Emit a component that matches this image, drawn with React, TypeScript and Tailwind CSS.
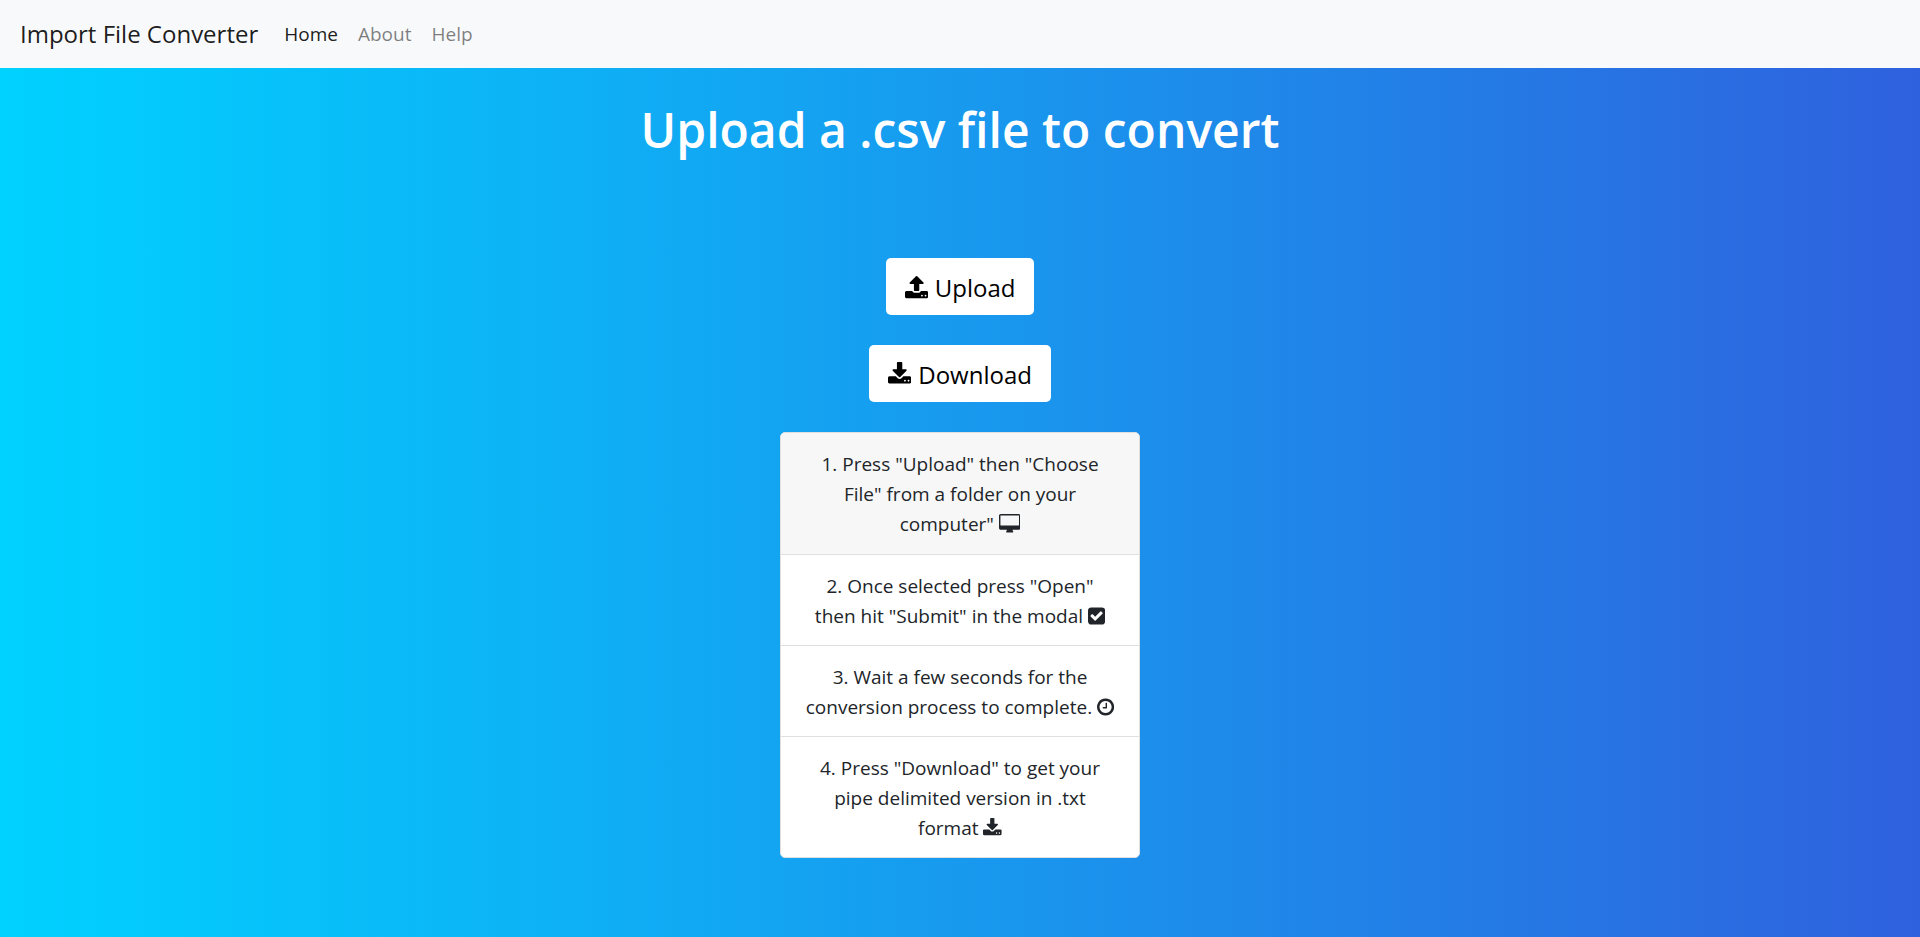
import type { ReactNode } from "react";

type IconProps = { viewBox: string; className: string; d: string };

function Icon({ viewBox, className, d }: IconProps) {
  return (
    <svg viewBox={viewBox} className={className} fill="currentColor" aria-hidden="true">
      <path d={d} />
    </svg>
  );
}

const uploadPath =
  "M1344 1472q0-26-19-45t-45-19-45 19-19 45 19 45 45 19 45-19 19-45zm256 0q0-26-19-45t-45-19-45 19-19 45 19 45 45 19 45-19 19-45zm128-224v320q0 40-28 68t-68 28h-1472q-40 0-68-28t-28-68v-320q0-40 28-68t68-28h427q21 56 70.500 92t110.500 36h256q61 0 110.500-36t70.500-92h427q40 0 68 28t28 68zm-325-648q-17 40-59 40h-256v448q0 26-19 45t-45 19h-256q-26 0-45-19t-19-45v-448h-256q-42 0-59-40-17-39 14-69l448-448q18-19 45-19t45 19l448 448q31 30 14 69z";
const downloadPath =
  "M1344 1344q0-26-19-45t-45-19-45 19-19 45 19 45 45 19 45-19 19-45zm256 0q0-26-19-45t-45-19-45 19-19 45 19 45 45 19 45-19 19-45zm128-224v320q0 40-28 68t-68 28h-1472q-40 0-68-28t-28-68v-320q0-40 28-68t68-28h465l135 136q58 56 136 56t136-56l136-136h464q40 0 68 28t28 68zm-325-569q17 41-14 70l-448 448q-18 19-45 19t-45-19l-448-448q-31-29-14-70 17-39 59-39h256v-448q0-26 19-45t45-19h256q26 0 45 19t19 45v448h256q42 0 59 39z";
const desktopPath =
  "M1728 992v-832q0-13-9.500-22.500t-22.500-9.500h-1600q-13 0-22.500 9.500t-9.500 22.500v832q0 13 9.500 22.500t22.500 9.500h1600q13 0 22.500-9.500t9.500-22.500zm128-832v1088q0 66-47 113t-113 47h-544q0 37 16 77.500t32 71 16 43.500q0 26-19 45t-45 19h-512q-26 0-45-19t-19-45q0-14 16-44t32-70 16-78h-544q-66 0-113-47t-47-113v-1088q0-66 47-113t113-47h1600q66 0 113 47t47 113z";
const checkPath =
  "M813 1299l614-614q19-19 19-45t-19-45l-102-102q-19-19-45-19t-45 19l-467 467-211-211q-19-19-45-19t-45 19l-102 102q-19 19-19 45t19 45l358 358q19 19 45 19t45-19zm851-883v960q0 119-84.500 203.500t-203.500 84.500h-960q-119 0-203.500-84.500t-84.500-203.500v-960q0-119 84.500-203.500t203.500-84.500h960q119 0 203.500 84.500t84.500 203.500z";
const clockPath =
  "M1024 544v448q0 14-9 23t-23 9h-320q-14 0-23-9t-9-23v-64q0-14 9-23t23-9h224v-352q0-14 9-23t23-9h64q14 0 23 9t9 23zm416 352q0-148-73-273t-198-198-273-73-273 73-198 198-73 273 73 273 198 198 273 73 273-73 198-198 73-273zm224 0q0 209-103 385.500t-279.500 279.500-385.500 103-385.500-103-279.500-279.500-103-385.500 103-385.500 279.500-279.500 385.500-103 385.500 103 279.500 279.500 103 385.500z";

const inlineIcon = "inline-block h-5 w-auto align-[-3px]";

const steps: { lines: string[]; icon: ReactNode }[] = [
  {
    lines: ['1. Press "Upload" then "Choose', 'File" from a folder on your', 'computer"'],
    icon: <Icon viewBox="-64 0 1920 1792" className={inlineIcon} d={desktopPath} />,
  },
  {
    lines: ['2. Once selected press "Open"', 'then hit "Submit" in the modal'],
    icon: <Icon viewBox="128 0 1536 1792" className={inlineIcon} d={checkPath} />,
  },
  {
    lines: ["3. Wait a few seconds for the", "conversion process to complete."],
    icon: <Icon viewBox="128 0 1536 1792" className={inlineIcon} d={clockPath} />,
  },
  {
    lines: ['4. Press "Download" to get your', "pipe delimited version in .txt", "format"],
    icon: <Icon viewBox="64 0 1664 1792" className={inlineIcon} d={downloadPath} />,
  },
];

function ActionButton({ icon, children }: { icon: ReactNode; children: ReactNode }) {
  return (
    <button
      type="button"
      className="flex h-[57px] items-center gap-[7px] rounded-[5px] bg-white px-[19px] pt-[2px] text-[24px] text-black"
    >
      {icon}
      {children}
    </button>
  );
}

export default function App() {
  return (
    <div className="flex min-h-screen flex-col bg-linear-to-r/srgb from-[#00d2ff] to-[#2f61de] font-['Open_Sans','Noto_Sans',sans-serif] text-[19px] leading-[30px] text-[#212529]">
      <nav className="flex h-[68px] items-center bg-[#f8f9fa] px-5">
        <a href="#" className="mr-[26px] text-[24px] text-black/90">
          Import File Converter
        </a>
        <div className="flex gap-5">
          <a href="#home" className="text-black/90">Home</a>
          <a href="#about" className="text-black/50">About</a>
          <a href="#help" className="text-black/50">Help</a>
        </div>
      </nav>
      <main className="flex flex-col items-center pt-8">
        <h1 className="mb-[98px] text-[48px] leading-[60px] font-semibold text-white">
          Upload a .csv file to convert
        </h1>
        <div className="flex flex-col items-center gap-[30px]">
          <ActionButton
            icon={<Icon viewBox="64 0 1664 1792" className="h-[25px] w-auto" d={uploadPath} />}
          >
            Upload
          </ActionButton>
          <ActionButton
            icon={<Icon viewBox="64 0 1664 1792" className="h-[25px] w-auto" d={downloadPath} />}
          >
            Download
          </ActionButton>
          <ul className="w-[360px] divide-y divide-[#dfdfdf] overflow-hidden rounded-[5px] border border-[#dfdfdf] bg-white text-center">
            {steps.map(({ lines, icon }) => (
              <li key={lines[0]} className="pt-4 pb-[14px] first:bg-[#f7f7f7] first:pb-[15px]">
                {lines.map((line, i) => (
                  <span key={line} className="block whitespace-nowrap">
                    {line}
                    {i === lines.length - 1 && <> {icon}</>}
                  </span>
                ))}
              </li>
            ))}
          </ul>
        </div>
      </main>
    </div>
  );
}
